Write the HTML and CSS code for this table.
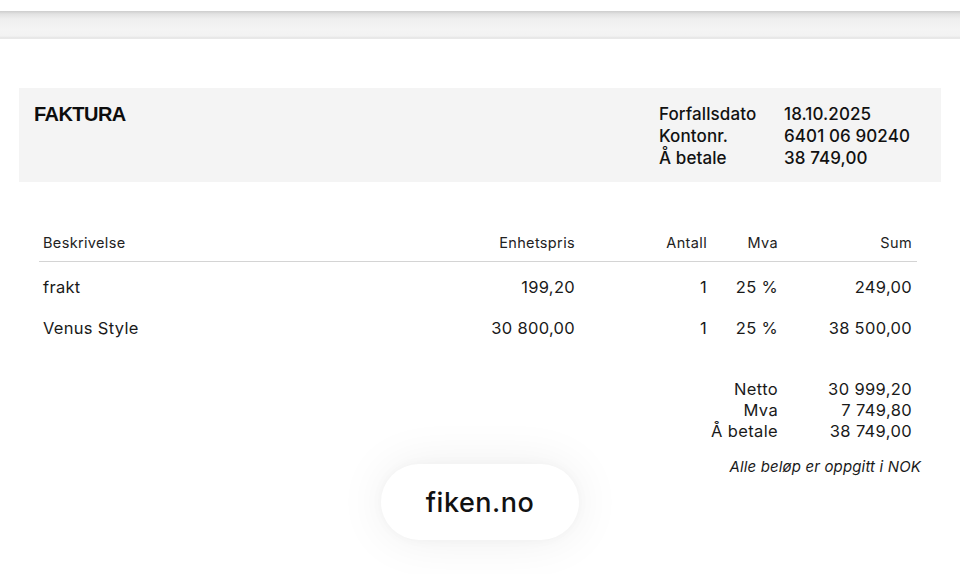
FILE: index.html
```html
<!DOCTYPE html>
<html lang="no">
<head>
<meta charset="utf-8">
<title>Faktura</title>
<link rel="stylesheet" href="styles.css">
</head>
<body>
<div class="topbar"></div>
<main class="page">
  <section class="header">
    <h1 class="title">FAKTURA</h1>
    <dl class="info">
      <dt>Forfallsdato</dt><dd>18.10.2025</dd>
      <dt>Kontonr.</dt><dd>6401 06 90240</dd>
      <dt>Å betale</dt><dd>38 749,00</dd>
    </dl>
  </section>

  <section class="lines">
    <div class="row head">
      <div class="c desc">Beskrivelse</div>
      <div class="c num">Enhetspris</div>
      <div class="c num">Antall</div>
      <div class="c num">Mva</div>
      <div class="c num last">Sum</div>
    </div>
    <div class="body">
      <div class="row item">
        <div class="c desc">frakt</div>
        <div class="c num">199,20</div>
        <div class="c num">1</div>
        <div class="c num">25 %</div>
        <div class="c num last">249,00</div>
      </div>
      <div class="row item">
        <div class="c desc">Venus Style</div>
        <div class="c num">30 800,00</div>
        <div class="c num">1</div>
        <div class="c num">25 %</div>
        <div class="c num last">38 500,00</div>
      </div>
    </div>

    <div class="totals">
      <div class="tl">Netto</div><div class="tv">30 999,20</div>
      <div class="tl">Mva</div><div class="tv">7 749,80</div>
      <div class="tl">Å betale</div><div class="tv">38 749,00</div>
    </div>
    <p class="note">Alle beløp er oppgitt i NOK</p>
  </section>
</main>
<div class="pill">fiken.no</div>
</body>
</html>
```

FILE: styles.css
```css
* { box-sizing: border-box; }
html, body { margin: 0; padding: 0; background: #ffffff; }
body {
  font-family: Inter, "Noto Sans", "Liberation Sans", sans-serif;
  color: #111111;
  width: 960px;
  height: 574px;
  overflow: hidden;
}
.topbar {
  margin-top: 11px;
  height: 28px;
  background: linear-gradient(#cdcdcd 0px, #e2e2e2 3px, #efefef 8px, #f4f4f4 18px, #f2f2f2 25px, #e4e4e4 27px, #ececec 28px);
}
.page {
  padding: 49px 19px 0 19px;
}
.header {
  background: #f4f4f4;
  height: 94px;
  display: flex;
  justify-content: space-between;
  align-items: flex-start;
  padding: 15px 26px 0 15px;
}
.title {
  margin: 0;
  font-family: "Liberation Sans", Arial, sans-serif;
  font-weight: 700;
  font-size: 20px;
  line-height: 22px;
  letter-spacing: -0.55px;
  color: #0d0d0d;
}
.info {
  margin: 0;
  display: grid;
  grid-template-columns: 125px 131px;
  font-size: 17px;
  line-height: 22px;
  font-weight: 500;
  letter-spacing: 0.1px;
  color: #111;
}
.info dt, .info dd { margin: 0; }
.lines {
  margin: 42px 24px 0 20px;
}
.row {
  display: grid;
  grid-template-columns: 1fr 150px 132px 71px 139px;
}
.head {
  height: 38px;
  align-items: center;
  font-size: 14.5px;
  letter-spacing: 0.35px;
  color: #222;
  border-bottom: 1px solid #d4d4d4;
}
.c.desc { padding-left: 4px; }
.c.num { text-align: right; }
.c.last { padding-right: 5px; }
.body { padding-top: 5px; }
.item {
  height: 41px;
  line-height: 41px;
  font-size: 16.5px;
  letter-spacing: 0.3px;
  color: #1a1a1a;
}
.totals {
  margin-top: 30px;
  display: grid;
  grid-template-columns: 1fr 139px;
  font-size: 16.5px;
  line-height: 21px;
  letter-spacing: 0.35px;
  color: #1a1a1a;
}
.tl { text-align: right; }
.tv { text-align: right; padding-right: 5px; }
.note {
  margin: 15px -4px 0 0;
  text-align: right;
  font-size: 15px;
  line-height: 20px;
  letter-spacing: 0.15px;
  font-style: italic;
  color: #1a1a1a;
}
.pill {
  position: absolute;
  left: 381px;
  top: 464px;
  width: 198px;
  height: 76px;
  border-radius: 38px;
  background: #ffffff;
  box-shadow: 0 0 50px rgba(0,0,0,0.07), 0 0 12px rgba(0,0,0,0.03);
  display: flex;
  align-items: center;
  justify-content: center;
  font-size: 27px;
  font-weight: 500;
  letter-spacing: 0.5px;
  color: #111;
}
```
